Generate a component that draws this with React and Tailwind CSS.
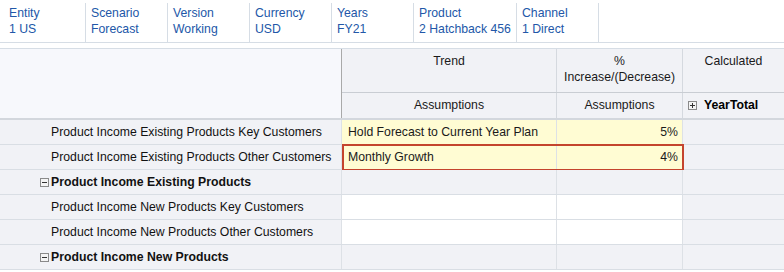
import React from 'react';

const povItems = [
  { label: 'Entity', value: '1 US', w: 'w-[86px] pl-[9px]' },
  { label: 'Scenario', value: 'Forecast', w: 'w-[82px] pl-[5px]' },
  { label: 'Version', value: 'Working', w: 'w-[82px] pl-[5px]' },
  { label: 'Currency', value: 'USD', w: 'w-[82px] pl-[5px]' },
  { label: 'Years', value: 'FY21', w: 'w-[82px] pl-[5px]' },
  { label: 'Product', value: '2 Hatchback 456', w: 'w-[103px] pl-[5px]' },
  { label: 'Channel', value: '1 Direct', w: 'w-[82px] pl-[5px]' },
];

const rows = [
  { name: 'Product Income Existing Products Key Customers', trend: 'Hold Forecast to Current Year Plan', pct: '5%', kind: 'input' },
  { name: 'Product Income Existing Products Other Customers', trend: 'Monthly Growth', pct: '4%', kind: 'input', selected: true },
  { name: 'Product Income Existing Products', kind: 'total' },
  { name: 'Product Income New Products Key Customers', kind: 'empty' },
  { name: 'Product Income New Products Other Customers', kind: 'empty' },
  { name: 'Product Income New Products', kind: 'total' },
];

// Small square expand/collapse box
const ToggleBox = ({ plus }) => (
  <span className="inline-flex items-center justify-center w-[9px] h-[9px] border border-[#8a8a8a] bg-[#f4f4f4] shrink-0">
    <svg width="7" height="7" viewBox="0 0 7 7">
      <path d="M1 3.5h5" stroke="#333" strokeWidth="1" />
      {plus && <path d="M3.5 1v5" stroke="#333" strokeWidth="1" />}
    </svg>
  </span>
);

const App = () => {
  return (
    <div className="w-[784px] h-[272px] bg-white overflow-hidden text-[12.25px] font-['Liberation_Sans',Arial,sans-serif]">
      {/* Barra POV */}
      <div className="flex h-[43px] border-b border-[#d6dde5] pt-[3px]">
        {povItems.map((p) => (
          <div key={p.label} className={`${p.w} h-[39px] border-r border-[#d6dde5] pt-[2px] leading-[16px] text-[#2257a8]`}>
            <div>{p.label}</div>
            <div>{p.value}</div>
          </div>
        ))}
      </div>

      {/* Grid */}
      <div className="mt-[5px] border-t border-[#d6dde5]">
        {/* Cabecera */}
        <div className="flex">
          <div className="w-[342px] h-[69px] bg-[#f7f8fc] border-r border-[#a9a9a9]" />
          <div className="flex-1 flex flex-col text-[#1a1a1a]">
            <div className="flex h-[44px] border-b border-[#c9cdd3] bg-[#f1f2f6]">
              <div className="w-[215px] border-r border-[#d5d9df] text-center pt-[4px] leading-[16px]">Trend</div>
              <div className="w-[126px] border-r border-[#d5d9df] text-center pt-[4px] leading-[16px]">
                <div>%</div>
                <div>Increase/(Decrease)</div>
              </div>
              <div className="flex-1 text-center pt-[4px] leading-[16px]">Calculated</div>
            </div>
            <div className="flex h-[25px] bg-[#f1f2f6] leading-[16px]">
              <div className="w-[215px] border-r border-[#d5d9df] text-center pt-[4px]">Assumptions</div>
              <div className="w-[126px] border-r border-[#d5d9df] text-center pt-[4px]">Assumptions</div>
              <div className="flex-1 flex items-start pl-[5px] pt-[2px]">
                <span className="mt-[2px]"><ToggleBox plus /></span>
                <span className="ml-[7px] mt-[2px] font-bold text-black">YearTotal</span>
              </div>
            </div>
          </div>
        </div>

        {/* Filas */}
        <div className="border-t-2 border-[#d3d7dd]">
          {rows.map((r) => (
            <div key={r.name} className="relative flex h-[25px] border-b border-[#d9dee4] bg-[#f1f2f6]">
              <div className="w-[342px] border-r border-[#dde1e6] flex items-center pt-[1px] text-[#111]">
                {r.kind === 'total' ? (
                  <div className="flex items-center pl-[40px] gap-[2px] font-bold">
                    <ToggleBox />
                    <span>{r.name}</span>
                  </div>
                ) : (
                  <span className="pl-[51px]">{r.name}</span>
                )}
              </div>
              <div
                className={`w-[215px] border-r border-[#dde1e6] flex items-center pl-[6px] pt-[1px] text-[#1a1a1a] ${
                  r.kind === 'input' ? 'bg-[#fffcd3]' : r.kind === 'empty' ? 'bg-white' : ''
                }`}
              >
                {r.trend}
              </div>
              <div
                className={`w-[126px] border-r border-[#dde1e6] flex items-center justify-end pr-[4px] pt-[1px] text-[#1a1a1a] ${
                  r.kind === 'input' ? 'bg-[#fffcd3]' : r.kind === 'empty' ? 'bg-white' : ''
                }`}
              >
                {r.pct}
              </div>
              <div className="flex-1" />
              {r.selected && (
                <div className="absolute left-[342px] top-[-1px] w-[342px] h-[27px] border-2 border-[#c4442d] pointer-events-none" />
              )}
            </div>
          ))}
        </div>
      </div>
    </div>
  );
};

export default App;
